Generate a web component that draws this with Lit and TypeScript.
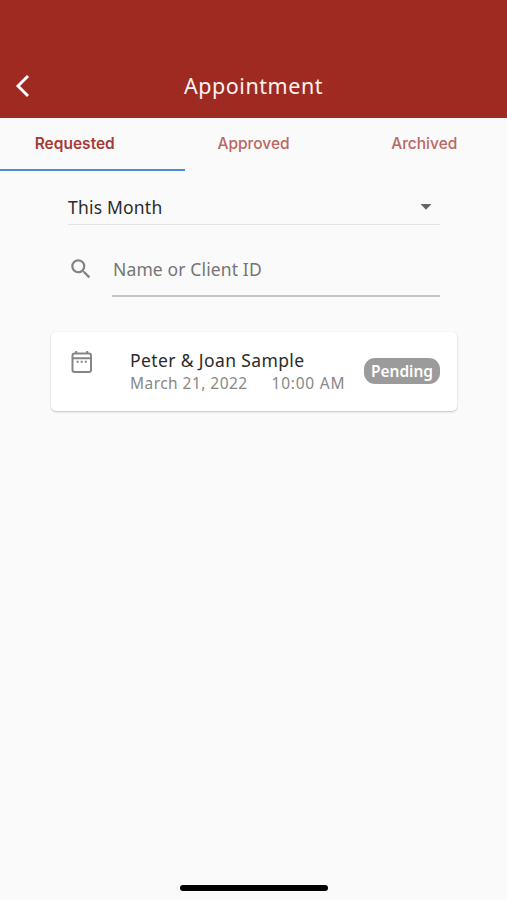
import { LitElement, html, css } from "lit";
import { customElement } from "lit/decorators.js";

@customElement("app-root")
export class AppRoot extends LitElement {
  static styles = css`
    :host {
      display: flex;
      flex-direction: column;
      height: 900px;
      width: 100%;
      box-sizing: border-box;
      background: #fafafa;
      color: #2b2b2b;
      font-family: "Noto Sans", "Open Sans", sans-serif;
      white-space: nowrap;
      overflow: hidden;
    }
    * { box-sizing: border-box; }
    svg { display: block; flex: none; }
    header {
      height: 118px;
      padding: 54px 15px 0;
      background: #9f2a22;
      color: #fff3f1;
      display: grid;
      grid-template-columns: 40px 1fr 40px;
      align-items: center;
    }
    .title { text-align: center; font-size: 21.5px; line-height: 30px; letter-spacing: 0.55px; }
    nav {
      display: grid;
      grid-template-columns: 184.5px 138px 184.5px;
      height: 53px;
      font-family: Inter, sans-serif;
      font-size: 15.5px;
      font-weight: 500;
      line-height: 20px;
      color: #bb6762;
    }
    .tab { padding-top: 16px; text-align: center; }
    .tab.active { color: #a73a36; border-bottom: 2px solid #4a8bdc; padding-right: 35px; font-weight: 600; }
    .tab:last-child { padding-left: 19px; }
    .filters { padding: 0 67px 0 68px; }
    .select {
      height: 54px;
      padding: 19px 8px 0 0;
      border-bottom: 1px solid #e3e3e3;
      display: flex;
      align-items: center;
      justify-content: space-between;
    }
    .month { font-size: 17.5px; line-height: 24px; letter-spacing: 0.2px; }
    .search { display: flex; height: 72px; }
    .search svg { margin: 31px 18px 0 0; }
    .field {
      flex: 1;
      border-bottom: 2px solid #c4c4c4;
      padding-top: 31px;
      padding-left: 1px;
      line-height: 26px;
      font-size: 17.5px;
      letter-spacing: 0.13px;
      color: #757575;
    }
    .card {
      margin: 35px 50px 0 51px;
      height: 79px;
      padding: 0 18px 0 18px;
      background: #fff;
      border-radius: 5px;
      box-shadow: 0 1px 2px rgba(0, 0, 0, 0.22), 0 0 2px rgba(0, 0, 0, 0.04);
      display: flex;
    }
    .card svg { margin-top: 17px; }
    .info { margin: 16px 0 0 36px; flex: 1; }
    .name { font-size: 17.5px; line-height: 24px; letter-spacing: 0.38px; }
    .when { display: flex; gap: 24px; font-size: 15.5px; line-height: 22px; letter-spacing: 0.45px; color: #888; }
    .when .time { letter-spacing: 0.75px; }
    .badge {
      width: 76px;
      height: 26px;
      margin: 26px -1px 0 0;
      border-radius: 11px;
      background: #9b9b9b;
      color: #fff;
      font-size: 15.5px;
      font-weight: 600;
      line-height: 26px;
      text-align: center;
    }
    .home { margin: auto 179px 9px 180px; width: 148px; height: 6px; border-radius: 3px; background: #000; }
  `;

  render() {
    return html`
      <header>
        <svg width="15" height="24" viewBox="0 0 15 24" fill="none" stroke="#fff" stroke-width="2.9">
          <path d="M13 2 3 12l10 10" />
        </svg>
        <div class="title"><span>Appointment</span></div>
      </header>
      <nav>
        <div class="tab active"><span>Requested</span></div>
        <div class="tab"><span>Approved</span></div>
        <div class="tab"><span>Archived</span></div>
      </nav>
      <section class="filters">
        <div class="select">
          <span class="month">This Month</span>
          <svg width="12" height="6" viewBox="0 0 12 6"><path d="M0.5 0h11L6 5.8z" fill="#666" /></svg>
        </div>
        <div class="search">
          <svg width="26" height="26" viewBox="0 0 24 24" fill="#828282">
            <path d="M15.5 14h-.79l-.28-.27A6.47 6.47 0 0 0 16 9.5 6.5 6.5 0 1 0 9.5 16c1.61 0 3.09-.59 4.23-1.57l.27.28v.79l5 4.99L20.49 19l-4.99-5zm-6 0a4.5 4.5 0 1 1 0-9 4.5 4.5 0 0 1 0 9z" />
          </svg>
          <div class="field"><span>Name or Client ID</span></div>
        </div>
      </section>
      <article class="card">
        <svg width="25" height="26" viewBox="0 0 25 26" fill="none" stroke="#858585" stroke-width="2">
          <rect x="3.5" y="4.5" width="18.5" height="18.5" rx="2" />
          <path d="M3.5 9.3h18.5M7.2 2v3M18.2 2v3" />
          <path d="M7.6 12.8h2M11.7 12.8h2M15.8 12.8h2" />
        </svg>
        <div class="info">
          <div class="name"><span>Peter &amp; Joan Sample</span></div>
          <div class="when"><span>March 21, 2022</span><span class="time">10:00 AM</span></div>
        </div>
        <div class="badge"><span>Pending</span></div>
      </article>
      <div class="home"></div>
    `;
  }
}
